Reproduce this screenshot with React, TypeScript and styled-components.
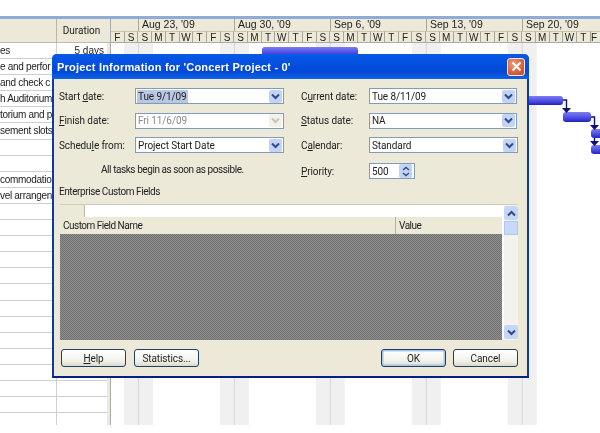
import React from "react";
import styled, { createGlobalStyle } from "styled-components";

const Global = createGlobalStyle`
  html, body { margin: 0; padding: 0; background: #fff; }
  #root { width: 600px; height: 433px; overflow: hidden; }
  * { box-sizing: border-box; }
`;

const Page = styled.div`
  position: relative;
  width: 600px;
  height: 433px;
  padding-top: 16px;
  overflow: hidden;
  background: #fff;
  font-family: "Liberation Sans", Arial, sans-serif;
  font-size: 10.5px;
  color: #222;
  filter: blur(0.4px);
`;

const Project = styled.div`
  display: flex;
  height: 409px;
  border-top: 3px solid #8fabd8;
`;

const Sheet = styled.div`
  flex: 0 0 111px;
  border-right: 1px solid #aaa;
  background: linear-gradient(to left, #ece9d8 3px, #fff 3px);
  overflow: hidden;
`;

const SheetHead = styled.div`
  display: grid;
  grid-template-columns: 57px 54px;
  height: 24px;
  background: #ece9d8;
  border-bottom: 1px solid #bbb;
`;

const HeadCell = styled.div`
  border-right: 1px solid #b9b6a6;
  line-height: 24px;
  text-align: center;
  padding-right: 4px;
  font-family: Roboto, "Liberation Sans", sans-serif;
  font-size: 10px;
`;

const Row = styled.div`
  display: grid;
  grid-template-columns: 57px 50px;
  height: 16.1px;
  border-bottom: 1px solid #cfcfcf;
  line-height: 15px;
  white-space: nowrap;
  width: 107px;
  font-size: 10px;
`;

const Name = styled.div`
  border-right: 1px solid #cfcfcf;
  overflow: hidden;
  letter-spacing: -0.3px;
`;

const Dur = styled.div`
  text-align: right;
  padding-right: 3px;
`;

const Timeline = styled.div`
  position: relative;
  flex: 1;
  min-width: 0;
`;

const Weeks = styled.div`
  display: flex;
  height: 12px;
  background: #ece9d8;
  padding-left: 27px;
`;

const Week = styled.div`
  flex: 0 0 96px;
  border-left: 1px solid #a9a695;
  padding-left: 3px;
  line-height: 11px;
  white-space: nowrap;
  font-size: 10.5px;
`;

const Days = styled.div`
  display: flex;
  height: 12px;
  background: #ece9d8;
  border-bottom: 1px solid #aaa;
`;

const Day = styled.div`
  flex: 0 0 13.715px;
  border-right: 1px solid #a9a695;
  border-top: 1px solid #c9c6b6;
  text-align: center;
  line-height: 11px;
  font-size: 10px;
  &:last-child { padding-right: 6px; }
`;

const Grid = styled.div`
  height: 382px;
  background-image:
    linear-gradient(to right, #d6d6d6 1px, transparent 1px),
    linear-gradient(to right, #f0f0f0 29px, transparent 29px);
  background-size: 95.95px 100%, 95.95px 100%;
  background-position: 27px 0, 13px 0;
  background-repeat: repeat-x;
`;

const Chart = styled.svg`
  position: absolute;
  left: 0;
  top: 24px;
  display: block;
`;

const Dialog = styled.div`
  position: absolute;
  left: 52px;
  top: 54px;
  width: 477px;
  height: 324px;
  display: flex;
  flex-direction: column;
  background: #ece9d8;
  border: 2px solid #0a3aa8;
  border-top: 0;
  border-bottom-color: #03217f;
  border-radius: 5px 5px 0 0;
  font-family: Roboto, "Liberation Sans", sans-serif;
  font-size: 10px;
  letter-spacing: -0.1px;
`;

const TitleBar = styled.div`
  flex: 0 0 25px;
  display: flex;
  align-items: center;
  justify-content: space-between;
  margin: 0 -2px;
  padding: 0 4px 0 5px;
  border-radius: 5px 5px 0 0;
  background: linear-gradient(to bottom, #0a5be0 0%, #0555e6 15%, #0349d6 70%, #0d63e6 100%);
  color: #fff;
  font-family: "Liberation Sans", Arial, sans-serif;
  font-size: 11px;
  font-weight: bold;
  letter-spacing: 0.2px;
  white-space: nowrap;
`;

const CloseButton = styled.div`
  width: 18px;
  height: 18px;
  display: flex;
  align-items: center;
  justify-content: center;
  border: 1px solid #f0e6e0;
  border-radius: 3px;
  background: radial-gradient(circle at 35% 30%, #ee9a7e, #d2522d 75%);
`;

const DialogBody = styled.div`
  flex: 1;
  display: flex;
  flex-direction: column;
  padding: 9px 9px 10px 5px;
`;

const Form = styled.div`
  display: grid;
  grid-template-columns: 242px 1fr;
  height: 95px;
`;

const FormColumn = styled.div`
  display: flex;
  flex-direction: column;
  gap: 8.5px;
`;

const Field = styled.div<{ $low?: boolean }>`
  display: flex;
  align-items: center;
  height: 16px;
  margin-top: ${(p) => (p.$low ? "1.5px" : "0")};
`;

const Label = styled.div<{ $w: number }>`
  flex: 0 0 ${(p) => p.$w}px;
  white-space: nowrap;
  u { text-decoration-thickness: 1px; text-underline-offset: 1px; }
`;

const Select = styled.div<{ $off?: boolean; $w: number }>`
  width: ${(p) => p.$w}px;
  height: 16px;
  display: flex;
  align-items: center;
  justify-content: space-between;
  padding: 0 1px;
  border: 1px solid #7f9db9;
  background: #fff;
  color: ${(p) => (p.$off ? "#8a8a8a" : "#222")};
  white-space: nowrap;
`;

const Selected = styled.span`
  background: #b9c6e4;
  padding: 0 1px;
  line-height: 13px;
`;

const Value = styled.span`
  padding-left: 1px;
`;

const Arrow = styled.div<{ $off?: boolean }>`
  flex: 0 0 13px;
  height: 13px;
  display: flex;
  align-items: center;
  justify-content: center;
  border-radius: 2px;
  background: ${(p) => (p.$off ? "#f2f1ea" : "#c3d3f5")};
`;

const Note = styled.div`
  height: 14px;
  margin: 1px 0 0 42px;
  white-space: nowrap;
  line-height: 13px;
  letter-spacing: -0.43px;
`;

const Spinner = styled.div`
  width: 46px;
  height: 16px;
  display: flex;
  align-items: center;
  justify-content: space-between;
  padding: 0 2px;
  border: 1px solid #7f9db9;
  background: #fff;
`;

const SpinArrows = styled.div`
  width: 13px;
  height: 14px;
  border-radius: 2px;
  background: #c3d3f5;
  display: flex;
  align-items: center;
  justify-content: center;
`;

const SectionTitle = styled.div`
  height: 19px;
  margin-top: 2px;
  line-height: 13px;
  white-space: nowrap;
  letter-spacing: -0.43px;
`;

const FieldsTable = styled.div`
  display: flex;
  width: 458px;
  margin-left: 1px;
  flex: 0 0 136px;
  background: #fff;
  border-top: 1px solid #cfccbd;
`;

const TableMain = styled.div`
  flex: 1;
  display: flex;
  flex-direction: column;
`;

const EntryRow = styled.div`
  flex: 0 0 12px;
  display: flex;
  background: #fff;
`;

const EntryCorner = styled.div`
  flex: 0 0 25px;
  background: #ece9d8;
  border-right: 1px solid #bdbaa9;
`;

const ColumnRow = styled.div`
  flex: 0 0 15px;
  display: grid;
  grid-template-columns: 336px 1fr;
  margin-right: 2px;
  background: #ece9d8;
  line-height: 17px;
`;

const ColumnHead = styled.div`
  padding-left: 3px;
  border-right: 1px solid #b5b2a1;
  letter-spacing: -0.5px;
  &:last-child { border-right: 0; }
`;

const EmptyArea = styled.div`
  flex: 1;
  margin-right: 2px;
  background: repeating-conic-gradient(#8e8e8e 0 25%, #727272 0 50%) 0 0 / 2px 2px;
`;

const Scrollbar = styled.div`
  flex: 0 0 14px;
  display: flex;
  flex-direction: column;
  background: #f3f3ee;
  padding: 1px 0;
`;

const ScrollButton = styled.div`
  flex: 0 0 14px;
  display: flex;
  align-items: center;
  justify-content: center;
  background: #c6d6f6;
  border-radius: 2px;
`;

const ScrollThumb = styled.div`
  flex: 0 0 14px;
  background: #c8d8f8;
  border: 1px solid #b3c6ee;
  margin-top: 1px;
`;

const ScrollTrack = styled.div`
  flex: 1;
`;

const Footer = styled.div`
  display: flex;
  justify-content: space-between;
  margin-top: 9px;
  padding-left: 2px;
  width: 459px;
`;

const ButtonGroup = styled.div<{ $gap: number }>`
  display: flex;
  gap: ${(p) => p.$gap}px;
`;

const Button = styled.div<{ $primary?: boolean }>`
  width: 65px;
  height: 18px;
  display: flex;
  align-items: center;
  justify-content: center;
  border: 1px solid #1f3f64;
  border-radius: 3px;
  background: linear-gradient(to bottom, #fff, #f1f1ea 70%, #dcd9cb);
  box-shadow: ${(p) => (p.$primary ? "inset 0 0 0 1.5px #a9c4ec" : "none")};
  u { text-decoration-thickness: 1px; text-underline-offset: 1px; }
`;

const Chevron = ({ off }: { off?: boolean }) => (
  <svg width="9" height="7" viewBox="0 0 9 7">
    <path d="M1 1.5 L4.5 5 L8 1.5" fill="none" stroke={off ? "#c4c4bc" : "#2c4a8c"} strokeWidth="2" />
  </svg>
);

const names = ["es", "e and perfor", " and check c", "h Auditorium", "torium and p", "sement slots", "", "", "commodation", "vel arrangen"];
const tasks: [string, string][] = Array.from({ length: 24 }, (_, i) => [names[i] ?? "", i === 0 ? "5 days" : ""]);

const weeks = ["Aug 23, '09", "Aug 30, '09", "Sep 6, '09", "Sep 13, '09", "Sep 20, '09"];
const days = "FSSMTWTFSSMTWTFSSMTWTFSSMTWTFSSMTWTF".split("");

const Select2 = ({ w, off, chosen, children }: { w: number; off?: boolean; chosen?: boolean; children: string }) => (
  <Select $w={w} $off={off}>
    {chosen ? <Selected>{children}</Selected> : <Value>{children}</Value>}
    <Arrow $off={off}>
      <Chevron off={off} />
    </Arrow>
  </Select>
);

const barFill = "url(#bar)";

export default function App() {
  return (
    <Page>
      <Global />
      <Project>
        <Sheet>
          <SheetHead>
            <HeadCell />
            <HeadCell>Duration</HeadCell>
          </SheetHead>
          {tasks.map(([n, d], i) => (
            <Row key={i}>
              <Name>{n}</Name>
              <Dur>{d}</Dur>
            </Row>
          ))}
        </Sheet>
        <Timeline>
          <Weeks>
            {weeks.map((w) => (
              <Week key={w}>{w}</Week>
            ))}
          </Weeks>
          <Days>
            {days.map((d, i) => (
              <Day key={i}>{d}</Day>
            ))}
          </Days>
          <Grid />
          <Chart width="489" height="130" viewBox="0 0 489 130">
            <defs>
              <linearGradient id="bar" x1="0" x2="0" y1="0" y2="1">
                <stop offset="0" stopColor="#7d7df0" />
                <stop offset="0.6" stopColor="#4a4ae6" />
                <stop offset="1" stopColor="#2222b8" />
              </linearGradient>
            </defs>
            <rect x="151" y="4" width="96" height="10" rx="3" fill={barFill} />
            <rect x="400" y="53" width="52" height="9" rx="3" fill={barFill} />
            <rect x="452" y="69" width="28" height="10" rx="3" fill={barFill} />
            <rect x="480" y="86" width="12" height="9" rx="3" fill={barFill} />
            <rect x="480" y="102" width="12" height="9" rx="3" fill={barFill} />
            <path d="M452 57 H455.5 V66 M480 74 H483.5 V83 M483.5 95 V99" fill="none" stroke="#10106e" strokeWidth="1.4" />
            <path d="M451 65 H460 L455.5 70 Z M479 82 H488 L483.5 87 Z M479 98 H488 L483.5 103 Z" fill="#10106e" />
          </Chart>
        </Timeline>
      </Project>
      <Dialog>
        <TitleBar>
          <span>Project Information for 'Concert Project - 0'</span>
          <CloseButton>
            <svg width="11" height="11" viewBox="0 0 11 11">
              <path d="M1.5 1.5 L9.5 9.5 M9.5 1.5 L1.5 9.5" stroke="#fff" strokeWidth="2" />
            </svg>
          </CloseButton>
        </TitleBar>
        <DialogBody>
          <Form>
            <FormColumn>
              <Field>
                <Label $w={76}>Start <u>d</u>ate:</Label>
                <Select2 w={149} chosen>Tue 9/1/09</Select2>
              </Field>
              <Field>
                <Label $w={76}><u>F</u>inish date:</Label>
                <Select2 w={149} off>Fri 11/6/09</Select2>
              </Field>
              <Field>
                <Label $w={76}>Schedu<u>l</u>e from:</Label>
                <Select2 w={149}>Project Start Date</Select2>
              </Field>
              <Note>All tasks begin as soon as possible.</Note>
            </FormColumn>
            <FormColumn>
              <Field>
                <Label $w={68}>C<u>u</u>rrent date:</Label>
                <Select2 w={148}>Tue 8/11/09</Select2>
              </Field>
              <Field>
                <Label $w={68}><u>S</u>tatus date:</Label>
                <Select2 w={148}>NA</Select2>
              </Field>
              <Field>
                <Label $w={68}>C<u>a</u>lendar:</Label>
                <Select2 w={149}>Standard</Select2>
              </Field>
              <Field $low>
                <Label $w={68}><u>P</u>riority:</Label>
                <Spinner>
                  <span>500</span>
                  <SpinArrows>
                    <svg width="8" height="11" viewBox="0 0 8 11">
                      <path d="M1 4 L4 1.5 L7 4 M1 7 L4 9.5 L7 7" fill="none" stroke="#2c4a8c" strokeWidth="1.4" />
                    </svg>
                  </SpinArrows>
                </Spinner>
              </Field>
            </FormColumn>
          </Form>
          <SectionTitle>Enterprise Custom Fields</SectionTitle>
          <FieldsTable>
            <TableMain>
              <EntryRow>
                <EntryCorner />
              </EntryRow>
              <ColumnRow>
                <ColumnHead>Custom Field Name</ColumnHead>
                <ColumnHead>Value</ColumnHead>
              </ColumnRow>
              <EmptyArea />
            </TableMain>
            <Scrollbar>
              <ScrollButton>
                <svg width="9" height="7" viewBox="0 0 9 7">
                  <path d="M1 5.5 L4.5 2 L8 5.5" fill="none" stroke="#2c4a8c" strokeWidth="2" />
                </svg>
              </ScrollButton>
              <ScrollThumb />
              <ScrollTrack />
              <ScrollButton>
                <Chevron />
              </ScrollButton>
            </Scrollbar>
          </FieldsTable>
          <Footer>
            <ButtonGroup $gap={8}>
              <Button><span><u>H</u>elp</span></Button>
              <Button>Statistics...</Button>
            </ButtonGroup>
            <ButtonGroup $gap={7}>
              <Button $primary>OK</Button>
              <Button>Cancel</Button>
            </ButtonGroup>
          </Footer>
        </DialogBody>
      </Dialog>
    </Page>
  );
}
